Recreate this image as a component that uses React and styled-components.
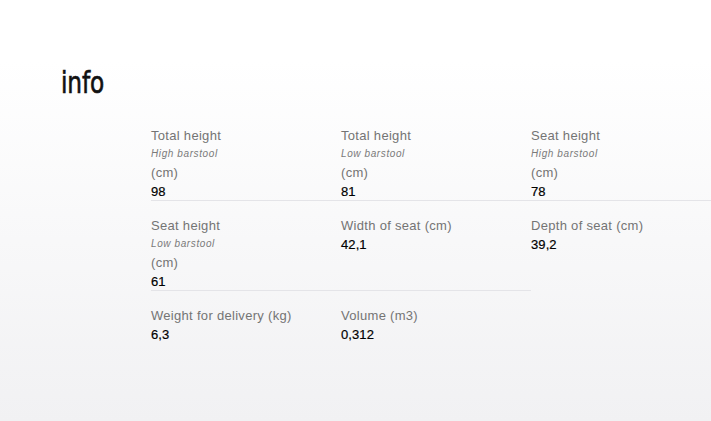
import React from "react";
import styled, { createGlobalStyle } from "styled-components";

const specs = [
  { label: "Total height", note: "High barstool", unit: "(cm)", value: "98" },
  { label: "Total height", note: "Low barstool", unit: "(cm)", value: "81" },
  { label: "Seat height", note: "High barstool", unit: "(cm)", value: "78" },
  { label: "Seat height", note: "Low barstool", unit: "(cm)", value: "61" },
  { label: "Width of seat (cm)", value: "42,1" },
  { label: "Depth of seat (cm)", value: "39,2" },
  { label: "Weight for delivery (kg)", value: "6,3" },
  { label: "Volume (m3)", value: "0,312" },
];

const Global = createGlobalStyle`
  html, body {
    margin: 0;
    padding: 0;
    overflow: hidden;
  }
  body {
    font-family: "Liberation Sans", Arial, sans-serif;
    background: #f2f2f4;
  }
`;

const Page = styled.main`
  min-height: 421px;
  background: linear-gradient(180deg, #ffffff 0px, #ffffff 60px, #f1f1f3 421px);
  padding: 63px 0 0 61px;
  box-sizing: border-box;
`;

const Heading = styled.h2`
  margin: 0;
  font-family: "DejaVu Sans", sans-serif;
  font-weight: 400;
  font-size: 31px;
  line-height: 38px;
  letter-spacing: -0.2px;
  color: #111;
  -webkit-text-stroke: 0.7px #111;
  transform: scaleX(0.75);
  transform-origin: left center;
`;

const Grid = styled.div`
  display: grid;
  grid-template-columns: repeat(3, 190px);
  margin: 25px 0 0 90px;
  width: 570px;
`;

const Cell = styled.div`
  display: flex;
  flex-direction: column;
  padding: ${(p) => (p.$first ? "0" : "15px")} 0 0;
  border-top: ${(p) => (p.$first ? "none" : "1px solid #e4e4e8")};
  height: 74px;
`;

const Label = styled.span`
  font-size: 13px;
  line-height: 19px;
  letter-spacing: 0.3px;
  color: #747474;
`;

const Note = styled.span`
  font-size: 10px;
  line-height: 18px;
  font-style: italic;
  letter-spacing: 0.6px;
  color: #7a7a7a;
`;

const Value = styled.span`
  font-size: 13px;
  line-height: 19px;
  font-weight: 400;
  letter-spacing: 0.1px;
  color: #000;
  -webkit-text-stroke: 0.2px #000;
`;

export default function App() {
  return (
    <Page>
      <Global />
      <Heading>info</Heading>
      <Grid>
        {specs.map((s, i) => (
          <Cell key={i} $first={i < 3}>
            <Label>{s.label}</Label>
            {s.note && <Note>{s.note}</Note>}
            {s.unit && <Label>{s.unit}</Label>}
            <Value>{s.value}</Value>
          </Cell>
        ))}
      </Grid>
    </Page>
  );
}
